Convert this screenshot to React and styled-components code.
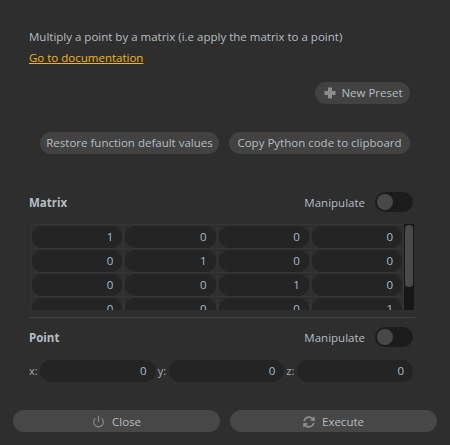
import React from 'react';
import styled, { createGlobalStyle } from 'styled-components';
import { Power } from 'lucide-react';
import { FaSyncAlt } from 'react-icons/fa';

const Global = createGlobalStyle`
  html, body {
    margin: 0;
    padding: 0;
    background: #2e2e2e;
  }
`;

const Page = styled.div`
  width: 450px;
  height: 445px;
  box-sizing: border-box;
  padding: 29px 13px 0;
  display: flex;
  flex-direction: column;
  background: #2e2e2e;
  color: #b4bec4;
  font-family: "Open Sans", "Noto Sans", sans-serif;
  font-size: 11.5px;
  line-height: 16px;
  overflow: hidden;
`;

const Content = styled.div`
  display: flex;
  flex-direction: column;
  padding: 0 27px 0 16px;
  flex: 1;
`;

const Description = styled.div`
  height: 16px;
`;

const DocLink = styled.a`
  margin-top: 5px;
  color: #f5b700;
  text-decoration: underline;
  align-self: flex-start;
`;

const Actions = styled.div`
  display: flex;
  justify-content: flex-end;
  gap: 10px;
  margin-top: ${({ $top }) => $top}px;
`;

const Pill = styled.button`
  display: flex;
  align-items: center;
  justify-content: center;
  gap: 5px;
  height: 22px;
  width: ${({ $width }) => $width}px;
  padding: 0;
  border: none;
  border-radius: 11px;
  background: #424242;
  color: #b4bec4;
  font: inherit;
  white-space: nowrap;

  svg {
    margin-left: 2px;
  }
`;

const SectionHead = styled.div`
  display: flex;
  justify-content: space-between;
  align-items: center;
  height: 20px;
  margin-top: ${({ $top }) => $top}px;
`;

const Title = styled.div`
  font-weight: 700;
  padding-top: 2px;
`;

const Manipulate = styled.div`
  display: flex;
  align-items: center;
  gap: 10px;
  margin-right: -3px;
`;

const ManipulateLabel = styled.span`
  padding-top: 1px;
`;

const Toggle = styled.div`
  display: flex;
  align-items: center;
  width: 38px;
  height: 20px;
  box-sizing: border-box;
  padding: 2px;
  border-radius: 10px;
  background: #1c1c1c;
`;

const Knob = styled.div`
  width: 16px;
  height: 16px;
  border-radius: 50%;
  background: #484848;
`;

const TableWrap = styled.div`
  display: flex;
  height: 86px;
  margin: 12px -4px 0 0;
  overflow: hidden;
`;

const Table = styled.div`
  flex: 1;
  display: grid;
  grid-template-columns: repeat(4, 1fr);
  grid-auto-rows: 24px;
  align-content: start;
  border-top: 1px solid #363636;
  border-left: 1px solid #363636;
  margin-left: 1px;
`;

const Cell = styled.div`
  box-sizing: border-box;
  padding: 1px;
  border-right: 1px solid #363636;
  border-bottom: 1px solid #363636;
`;

const NumberBox = styled.div`
  height: 22px;
  box-sizing: border-box;
  padding-right: 9px;
  border-radius: 11px;
  background: #242424;
  color: #a9bccb;
  line-height: 22px;
  text-align: right;
  flex: 1;
`;

const Scrollbar = styled.div`
  width: 10px;
  background: #171717;
  padding: 1px 1px 0;
  box-sizing: border-box;
`;

const Thumb = styled.div`
  height: 62px;
  border-radius: 4px;
  background: #4a4a4a;
`;

const Divider = styled.div`
  height: 1px;
  margin: 7px -5px 0 0;
  background: #434343;
`;

const PointRow = styled.div`
  display: flex;
  align-items: center;
  height: 22px;
  margin: 13px -3px 0 0;
`;

const Axis = styled.span`
  font-size: 11px;
  color: #a4aeb4;
  margin-left: ${({ $first }) => ($first ? 0 : 2)}px;
  width: 11px;
`;

const Footer = styled.div`
  display: flex;
  gap: 10px;
  margin-bottom: 13px;
`;

const WideButton = styled.button`
  flex: 1;
  display: flex;
  align-items: center;
  justify-content: center;
  gap: 7px;
  height: 22px;
  padding: 1px 0 0;
  border: none;
  border-radius: 11px;
  background: #474747;
  color: #b4bec4;
  font: inherit;
`;

const PlusIcon = () => (
  <svg width="12" height="12" viewBox="0 0 12 12">
    <path d="M4 0.500h4V4h3.500v4H8v3.500H4V8H0.500V4H4z" fill="#8c8c8c" />
  </svg>
);

const matrix = [
  [1, 0, 0, 0],
  [0, 1, 0, 0],
  [0, 0, 1, 0],
  [0, 0, 0, 1],
];

const Switch = () => (
  <Manipulate>
    <ManipulateLabel>Manipulate</ManipulateLabel>
    <Toggle><Knob /></Toggle>
  </Manipulate>
);

export default function App() {
  return (
    <Page>
      <Global />
      <Content>
        <Description>Multiply a point by a matrix (i.e apply the matrix to a point)</Description>
        <DocLink>Go to documentation</DocLink>

        <Actions $top={16}>
          <Pill $width={95}><PlusIcon /> New Preset</Pill>
        </Actions>
        <Actions $top={28}>
          <Pill $width={179}>Restore function default values</Pill>
          <Pill $width={181}>Copy Python code to clipboard</Pill>
        </Actions>

        <SectionHead $top={38}>
          <Title>Matrix</Title>
          <Switch />
        </SectionHead>
        <TableWrap>
          <Table>
            {matrix.flat().map((value, i) => (
              <Cell key={i}><NumberBox>{value}</NumberBox></Cell>
            ))}
          </Table>
          <Scrollbar><Thumb /></Scrollbar>
        </TableWrap>
        <Divider />

        <SectionHead $top={9}>
          <Title>Point</Title>
          <Switch />
        </SectionHead>
        <PointRow>
          <Axis $first>x:</Axis><NumberBox>0</NumberBox>
          <Axis>y:</Axis><NumberBox>0</NumberBox>
          <Axis>z:</Axis><NumberBox>0</NumberBox>
        </PointRow>
      </Content>
      <Footer>
        <WideButton><Power size={13} color="#8c8c8c" /> Close</WideButton>
        <WideButton><FaSyncAlt size={12} color="#8c8c8c" /> Execute</WideButton>
      </Footer>
    </Page>
  );
}
